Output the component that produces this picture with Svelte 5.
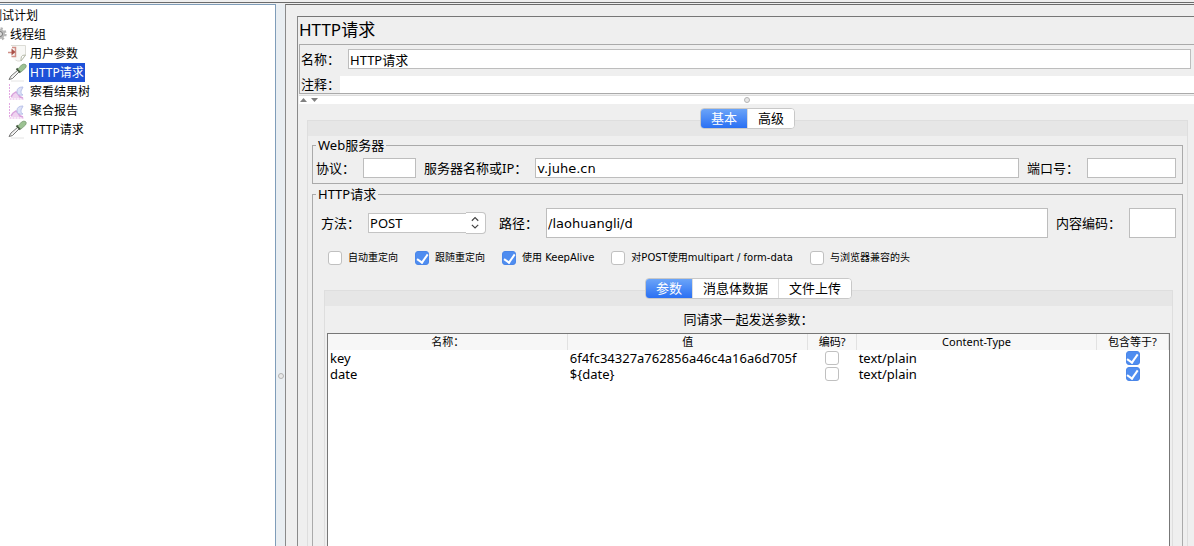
<script>
  let selected = $state(3);
  let mainTab = $state(0);
  let dataTab = $state(0);

  const tree = [
    { label: '测试计划', depth: 0, icon: '' },
    { label: '线程组', depth: 1, icon: 'gear' },
    { label: '用户参数', depth: 2, icon: 'params' },
    { label: 'HTTP请求', depth: 2, icon: 'sampler' },
    { label: '察看结果树', depth: 2, icon: 'report' },
    { label: '聚合报告', depth: 2, icon: 'report' },
    { label: 'HTTP请求', depth: 2, icon: 'sampler' },
  ];

  const mainTabs = ['基本', '高级'];
  const dataTabs = ['参数', '消息体数据', '文件上传'];

  let form = $state({
    name: 'HTTP请求',
    comment: '',
    protocol: '',
    server: 'v.juhe.cn',
    port: '',
    method: 'POST',
    path: '/laohuangli/d',
    encoding: '',
  });

  let options = $state([
    { label: '自动重定向', on: false },
    { label: '跟随重定向', on: true },
    { label: '使用 KeepAlive', on: true },
    { label: '对POST使用multipart / form-data', on: false },
    { label: '与浏览器兼容的头', on: false },
  ]);

  let rows = $state([
    { name: 'key', value: '6f4fc34327a762856a46c4a16a6d705f', encode: false, type: 'text/plain', include: true },
    { name: 'date', value: '${date}', encode: false, type: 'text/plain', include: true },
  ]);
</script>

{#snippet nodeIcon(kind)}
  <svg class="icon" width="21" height="19" viewBox="0 0 21 19" aria-hidden="true">
    {#if kind === 'gear'}
      <circle cx="12" cy="9" r="5" fill="#bbb" />
      <circle cx="12" cy="9" r="5.500" fill="none" stroke="#b4b4b4" stroke-width="2.400" stroke-dasharray="2.200 2.100" />
      <circle cx="12" cy="9" r="2.500" fill="#ddd" stroke="#777" />
    {:else if kind === 'params'}
      <path d="M4 1.500h13.500v10l-4.500 5.500h-4q-4-1-5-5z" fill="#f8f8f6" />
      <path d="M3 1.500h14.500v10l-5 5.500q-3 .500-5-1" fill="none" stroke="#dcdcd6" />
      <path d="M17.500 11q-3.500 0-4 1.500t-.5 4.500z" fill="#fff" stroke="#b5b9a8" />
      <path d="M0 8.500h4M4 3.500h3.500v9h-4" fill="none" stroke="#d09088" stroke-width="1.500" />
      <path d="M3.500 4.500l4 3.500-4 3.500z" fill="#a94f47" />
    {:else if kind === 'sampler'}
      <path d="M3 18h13" stroke="#e4e4e4" />
      <path d="M1 16.500l2-3.500 7-6 1.500 1.500-7 7z" fill="#f2f2f2" stroke="#777" stroke-width="1" />
      <path d="M8.500 5.500l4 4" stroke="#44583f" stroke-width="2" />
      <path d="M10 6l3.500-4q2.500-1.500 4-.5t0 3.500l-4.500 4z" fill="#9cc292" stroke="#7c9c76" stroke-width=".8" />
    {:else if kind === 'report'}
      <path d="M1.500 2v15h14.500" fill="none" stroke="#e3a9e3" stroke-dasharray="2 1" />
      <path d="M3 16l2-3 3-3 4 3 3 3z" fill="#efd3f0" />
      <path d="M3 15l2-3 3-2 2 2 2 3 3 1" fill="none" stroke="#d9a2dc" stroke-width="1.500" />
      <path d="M15 5q-6 0-6 4.500t6 3.500q-3-1-2-4z" fill="#dde2f7" stroke="#b9c1ea" stroke-width="1" />
    {/if}
  </svg>
{/snippet}

{#snippet tabs(items, active, pick)}
  <div class="tabs" role="tablist">
    {#each items as item, i}
      <button type="button" role="tab" class="tab" class:active={i === active} aria-selected={i === active} onclick={() => pick(i)}>{item}</button>
    {/each}
  </div>
{/snippet}

<div class="window">
  <div class="topbar"></div>
  <div class="body">
    <nav class="sidebar">
      <ul class="tree">
        {#each tree as node, i}
          <li class="node depth-{node.depth}">
            {@render nodeIcon(node.icon)}
            <button type="button" class="node-label" class:selected={i === selected} onclick={() => (selected = i)}>{node.label}</button>
          </li>
        {/each}
      </ul>
    </nav>
    <div class="splitter"><span class="grip"></span></div>

    <main class="workspace">
      <div class="editor">
        <h1>HTTP请求</h1>
        <div class="identity">
          <div class="line name-line">
            <label for="name">名称：</label>
            <input id="name" class="grow" bind:value={form.name} />
          </div>
          <div class="line">
            <label for="comment">注释：</label>
            <input id="comment" class="grow plain" bind:value={form.comment} />
          </div>
        </div>
        <div class="divider">
          <svg width="20" height="8" viewBox="0 0 20 8" aria-hidden="true">
            <path d="M1 6l3.500-4 3.500 4zM12 2h7l-3.500 4z" fill="#808080" />
          </svg>
          <span class="grip"></span>
        </div>

        <div class="tabbed main-tabs">
          {@render tabs(mainTabs, mainTab, (i) => (mainTab = i))}
          <div class="pane">
            <fieldset class="web">
              <legend>Web服务器</legend>
              <div class="line">
                <label for="protocol">协议：</label>
                <input id="protocol" class="protocol" bind:value={form.protocol} />
                <label for="server">服务器名称或IP：</label>
                <input id="server" class="grow" bind:value={form.server} />
                <label for="port">端口号：</label>
                <input id="port" class="port" bind:value={form.port} />
              </div>
            </fieldset>

            <fieldset class="request">
              <legend>HTTP请求</legend>
              <div class="line tall">
                <label for="method">方法：</label>
                <div class="combo">
                  <select id="method" bind:value={form.method}>
                    <option>GET</option>
                    <option>POST</option>
                    <option>PUT</option>
                    <option>DELETE</option>
                  </select>
                  <svg class="stepper" width="20" height="22" viewBox="0 0 20 22" aria-hidden="true">
                    <path d="M6 8.500l3.500-3.500 3.500 3.500M6 13l3.500 3.500 3.500-3.500" fill="none" stroke="#444" stroke-width="1.300" />
                  </svg>
                </div>
                <label for="path">路径：</label>
                <input id="path" class="grow" bind:value={form.path} />
                <label for="encoding">内容编码：</label>
                <input id="encoding" class="encoding" bind:value={form.encoding} />
              </div>

              <div class="options">
                {#each options as option}
                  <label class="option">
                    <input type="checkbox" bind:checked={option.on} />
                    {option.label}
                  </label>
                {/each}
              </div>

              <div class="tabbed data-tabs">
                {@render tabs(dataTabs, dataTab, (i) => (dataTab = i))}
                <div class="pane">
                  <p id="params-title">同请求一起发送参数：</p>
                  <div class="table-box">
                    <table aria-labelledby="params-title">
                      <thead>
                        <tr>
                          <th>名称：</th>
                          <th>值</th>
                          <th class="encode">编码?</th>
                          <th>Content-Type</th>
                          <th class="include">包含等于?</th>
                        </tr>
                      </thead>
                      <tbody>
                        {#each rows as row}
                          <tr>
                            <td>{row.name}</td>
                            <td>{row.value}</td>
                            <td class="check"><input type="checkbox" aria-label="编码?" bind:checked={row.encode} /></td>
                            <td>{row.type}</td>
                            <td class="check"><input type="checkbox" aria-label="包含等于?" bind:checked={row.include} /></td>
                          </tr>
                        {/each}
                      </tbody>
                    </table>
                  </div>
                </div>
              </div>
            </fieldset>
          </div>
        </div>
      </div>
    </main>
  </div>
</div>

<style>
  :global(body) {
    margin: 0;
    background: #eee;
  }

  .window {
    display: flex;
    flex-direction: column;
    min-height: 100vh;
    overflow: hidden;
    background: #efefef;
    color: #000;
    font: 13px/18px "Noto Sans", "Noto Sans CJK SC", sans-serif;
  }

  .window * {
    box-sizing: border-box;
  }

  button,
  input,
  select {
    font: inherit;
    color: inherit;
    margin: 0;
    border-radius: 0;
  }

  .topbar {
    height: 4px;
    background: linear-gradient(#efefef 2px, #6b6b6b 2px, #6b6b6b 3px, #efefef 3px);
  }

  .body {
    flex: 1;
    display: flex;
  }

  /* tree */
  .sidebar {
    flex: 0 0 276px;
    overflow: hidden;
    background: #fff;
    border-top: 1px solid #7f9db9;
    border-right: 1px solid #7f9db9;
  }

  .tree {
    list-style: none;
    margin: 1px 0 0 -32px;
    padding: 0;
    font-size: 12px;
  }

  .node {
    display: flex;
    align-items: center;
    height: 19px;
  }

  .depth-1 {
    padding-left: 20px;
  }

  .depth-2 {
    padding-left: 40px;
  }

  .icon {
    flex: none;
  }

  .node-label {
    height: 19px;
    padding: 0 1px;
    border: 0;
    background: none;
    line-height: 19px;
    white-space: nowrap;
  }

  .node-label.selected {
    background: #1c50d8;
    color: #fff;
  }

  .splitter {
    flex: 0 0 9px;
    display: flex;
    justify-content: center;
    align-items: flex-start;
    padding-top: 369px;
    background: #e9eef2;
  }

  .grip {
    width: 6px;
    height: 6px;
    border: 1px solid #b4b4b4;
    border-radius: 50%;
    background: #e8e8e8;
  }

  /* editor */
  .workspace {
    flex: 1;
    min-width: 0;
    display: flex;
    padding: 11px 0 0 11px;
    border-top: 1px solid #6b6b6b;
    border-left: 1px solid #8a8a8a;
  }

  .editor {
    flex: 1;
    min-width: 0;
    display: flex;
    flex-direction: column;
    border-top: 1px solid #777;
    border-left: 1px solid #8a8a8a;
  }

  h1 {
    margin: 0;
    padding: 0 0 2px 1px;
    font-size: 17px;
    font-weight: 400;
    line-height: 25px;
  }

  .identity {
    margin-left: 1px;
    padding: 4px 0 0 1px;
    border: 1px solid #aaa;
    border-right: 0;
  }

  .line {
    display: flex;
    align-items: center;
    gap: 8px;
  }

  .line label {
    white-space: nowrap;
  }

  .identity .line {
    gap: 0;
  }

  .identity .name-line {
    gap: 8px;
    margin-bottom: 6px;
    padding-right: 3px;
  }

  .line input {
    height: 20px;
    padding: 0 1px;
    border: 1px solid #bdbdbd;
    background: #fff;
  }

  .line .plain {
    height: 17px;
    border: 0;
  }

  .grow {
    flex: 1;
    min-width: 0;
  }

  .divider {
    display: grid;
    grid-template-columns: 1fr auto 1fr;
    align-items: center;
    height: 9px;
    margin: 1px 0 0 1px;
    border-top: 1px solid #ddd;
    background: #fff;
  }

  /* segmented tabs over a pane */
  .tabbed {
    flex: 1;
    display: flex;
    flex-direction: column;
  }

  .main-tabs {
    margin: 4px 6px 0 9px;
  }

  .tabs {
    position: relative;
    display: flex;
    align-self: center;
    height: 21px;
    margin-bottom: -9px;
    border: 1px solid #c8c8c8;
    border-radius: 4px;
    background: #fff;
    overflow: hidden;
  }

  .tab {
    padding: 0 10px;
    border: 0;
    border-left: 1px solid #ddd;
    background: #fff;
    line-height: 19px;
  }

  .tab:first-child {
    border-left: 0;
  }

  .tab.active {
    background: linear-gradient(#6ba4f8, #2a70f3);
    color: #fff;
  }

  .pane {
    flex: 1;
    display: flex;
    flex-direction: column;
    padding: 15px 4px 0;
    border: 1px solid #dedede;
    border-bottom: 0;
    background: linear-gradient(#e6e6e6 15px, #efefef 15px);
  }

  fieldset {
    min-width: 0;
    margin: 0;
    padding: 0 6px 5px 3px;
    border: 1px solid #aaa;
  }

  legend {
    height: 18px;
    padding: 0 2px;
  }

  .web {
    padding-top: 4px;
    margin-bottom: 1px;
  }

  .request {
    flex: 1;
    display: flex;
    flex-direction: column;
    padding-top: 5px;
    padding-bottom: 0;
    border-bottom: 0;
  }

  .web input,
  .tall input {
    font-family: "DejaVu Sans", "Noto Sans CJK SC", sans-serif;
  }

  .protocol {
    width: 53px;
  }

  .port {
    width: 89px;
  }

  .tall {
    padding-left: 5px;
  }

  .tall input {
    height: 30px;
  }

  .encoding {
    width: 47px;
  }

  .combo {
    display: flex;
    align-items: center;
    width: 118px;
    margin-right: 5px;
  }

  select {
    appearance: none;
    flex: 1;
    min-width: 0;
    height: 20px;
    padding: 0 1px;
    border: 1px solid #c4c4c4;
    border-right: 0;
    background: #fff;
  }

  .stepper {
    flex: none;
    border: 1px solid #c4c4c4;
    border-left: 0;
    border-radius: 0 4px 4px 0;
    background: #fff;
    pointer-events: none;
  }

  .options {
    display: flex;
    gap: 17px;
    height: 20px;
    margin: 10px 0;
    padding-left: 12px;
    font-family: "DejaVu Sans", "Noto Sans CJK SC", sans-serif;
    font-size: 10px;
  }

  .option {
    display: flex;
    align-items: center;
    gap: 6px;
    white-space: nowrap;
  }

  input[type="checkbox"] {
    appearance: none;
    display: flex;
    justify-content: center;
    width: 14px;
    height: 14px;
    border: 1px solid #c0c0c0;
    border-radius: 3px;
    background: #fff;
  }

  input[type="checkbox"]:checked {
    border-color: #4a86e8;
    background: #4f8df0;
  }

  input[type="checkbox"]:checked::before {
    content: "";
    width: 5px;
    height: 9px;
    border: solid #fff;
    border-width: 0 2px 2px 0;
    transform: rotate(35deg);
  }

  .data-tabs {
    margin: 0 3px 0 8px;
  }

  .data-tabs .pane {
    padding: 15px 2px 0;
  }

  p {
    margin: 0;
    line-height: 27px;
    text-align: center;
  }

  .table-box {
    flex: 1;
    border: 1px solid #777;
    border-bottom: 0;
    background: #fff;
  }

  table {
    width: 100%;
    table-layout: fixed;
    border-collapse: collapse;
  }

  th {
    height: 16px;
    padding: 0;
    border-right: 1px solid #e2e2e2;
    background: #f7f7f7;
    font-size: 11px;
    font-weight: 400;
    line-height: 16px;
  }

  .encode {
    width: 49px;
  }

  .include {
    width: 72px;
  }

  td {
    height: 16px;
    padding: 0 2px;
    line-height: 16px;
    white-space: nowrap;
  }

  td.check input {
    margin: 0 auto;
  }
</style>
